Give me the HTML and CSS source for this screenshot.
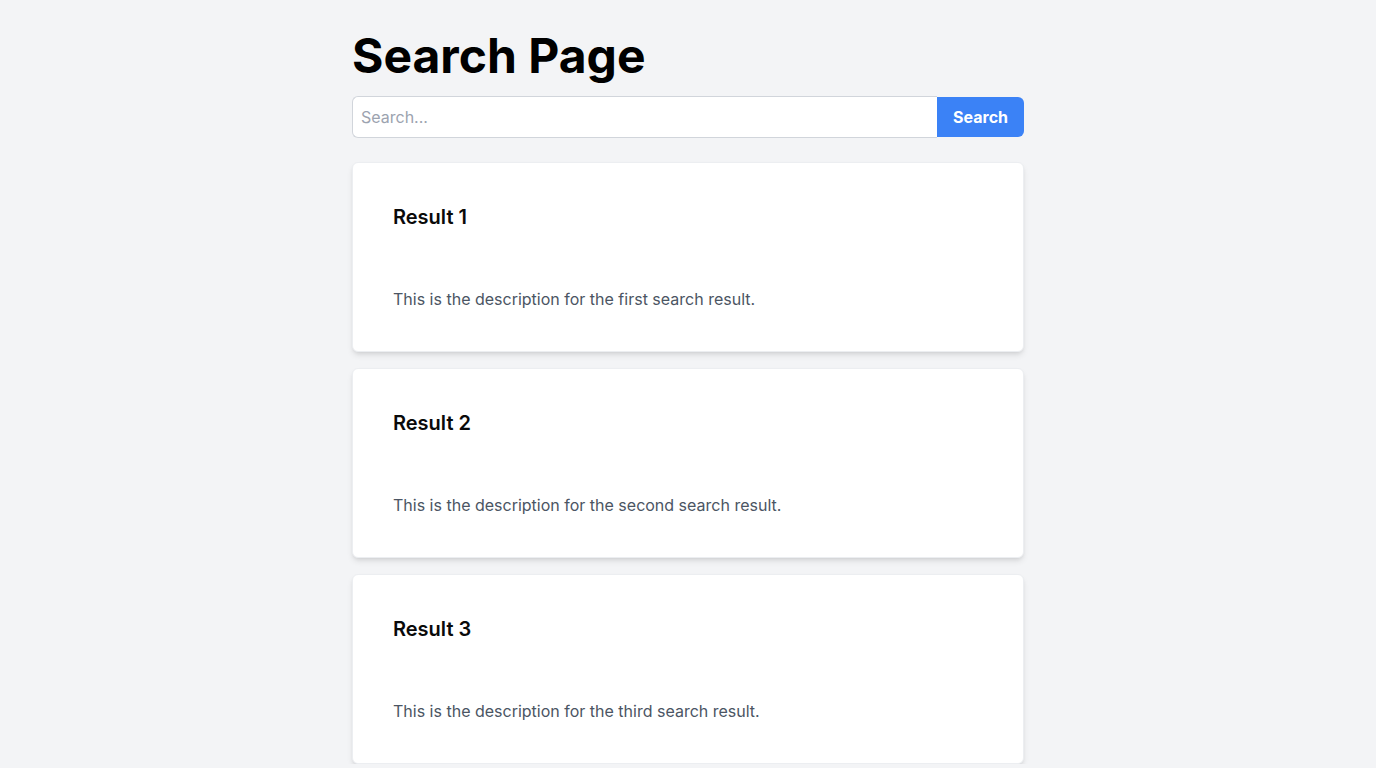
FILE: index.html
```html
<!DOCTYPE html>
<html lang="en">
<head>
<meta charset="utf-8">
<title>Search Page</title>
<link rel="stylesheet" href="styles.css">
</head>
<body>
  <main class="page">
    <h1 class="page-title">Search Page</h1>
    <form class="search-bar" onsubmit="return false;">
      <input class="search-input" type="text" placeholder="Search...">
      <button class="search-button" type="submit">Search</button>
    </form>
    <div class="results">
      <article class="result-card">
        <h2 class="result-title">Result 1</h2>
        <p class="result-desc">This is the description for the first search result.</p>
      </article>
      <article class="result-card">
        <h2 class="result-title">Result 2</h2>
        <p class="result-desc">This is the description for the second search result.</p>
      </article>
      <article class="result-card">
        <h2 class="result-title">Result 3</h2>
        <p class="result-desc">This is the description for the third search result.</p>
      </article>
    </div>
  </main>
</body>
</html>
```

FILE: styles.css
```css
* { box-sizing: border-box; }

html, body {
  margin: 0;
  padding: 0;
  background: #f3f4f6;
  font-family: Inter, "Noto Sans", sans-serif;
  color: #000;
}

.page {
  width: 672px;
  margin: 0 auto;
  padding-top: 32px;
}

.page-title {
  margin: 0 0 16px;
  font-size: 48px;
  line-height: 48px;
  font-weight: 700;
  color: #000;
}

.search-bar {
  display: flex;
  align-items: center;
  margin: 0 0 24px;
}

.search-input {
  flex: 1;
  height: 42px;
  padding: 8px;
  border: 1px solid #d1d5db;
  border-right: none;
  border-radius: 6px 0 0 6px;
  background: #fff;
  font-family: Inter, "Noto Sans", sans-serif;
  font-size: 16px;
  line-height: 24px;
  color: #111827;
  outline: none;
}

.search-input::placeholder { color: #9ca3af; }

.search-button {
  height: 40px;
  padding: 8px 16px;
  border: none;
  border-radius: 0 6px 6px 0;
  background: #3b82f6;
  color: #fff;
  font-family: Inter, "Noto Sans", sans-serif;
  font-size: 16px;
  line-height: 24px;
  font-weight: 700;
  cursor: pointer;
}

.results {
  display: flex;
  flex-direction: column;
  gap: 16px;
}

.result-card {
  height: 190px;
  padding: 40px 40px 39px;
  background: #fff;
  border: 1px solid #eceef1;
  border-radius: 6px;
  box-shadow: 0 4px 6px -1px rgba(0,0,0,0.1), 0 2px 4px -2px rgba(0,0,0,0.1);
}

.result-title {
  margin: 0 0 56px;
  font-size: 20px;
  line-height: 28px;
  font-weight: 600;
  color: #0a0a0a;
}

.result-desc {
  margin: 0;
  font-size: 16px;
  line-height: 24px;
  color: #4b5563;
}
```
